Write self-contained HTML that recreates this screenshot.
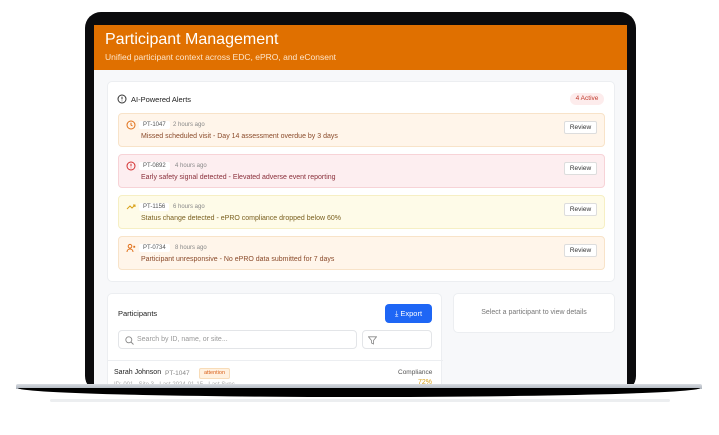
<!DOCTYPE html>
<html><head><style>
*{box-sizing:border-box;margin:0;padding:0}
body{width:719px;height:435px;background:#fff;position:relative;overflow:hidden;font-family:"Liberation Sans",sans-serif}
.abs{position:absolute}
.bezel{left:85px;top:12px;width:551px;height:380px;background:#0b0b0d;border-radius:16px}
.screen{left:94px;top:25px;width:533px;height:360px;background:#f7f8fa;overflow:hidden}
.hdr{left:0;top:0;width:533px;height:45px;background:#e07000;color:#fff}
.card{background:#fff;border:1px solid #eceef1;border-radius:5px}
.alert{left:10px;width:487px;height:34px;border-radius:4px;border:1px solid}
.pid{position:absolute;left:20px;top:7px;font-size:6px;color:#555;background:#fff;padding:1px 4px;border-radius:2px}
.ago{position:absolute;top:8px;font-size:6px;color:#888}
.msg{position:absolute;left:22px;top:19px;font-size:7px}
.rev{position:absolute;right:7px;top:7px;width:33px;height:13px;background:#fff;border:1px solid #ddd;border-radius:2px;font-size:6.5px;color:#333;text-align:center;line-height:11px}
.ic{position:absolute;left:7px;top:6px}
</style></head><body>
<div class="abs bezel"></div>
<div class="abs screen">
 <div class="abs hdr">
  <div class="abs" style="left:11px;top:6px;font-size:16px">Participant Management</div>
  <div class="abs" style="left:11px;top:27px;font-size:8.5px;color:#fde6cc">Unified participant context across EDC, ePRO, and eConsent</div>
 </div>
 <div class="abs card" style="left:13px;top:56px;width:508px;height:201px">
  <svg class="abs" style="left:9px;top:12px" width="10" height="10" viewBox="0 0 10 10"><circle cx="5" cy="5" r="4" fill="none" stroke="#333" stroke-width="1"/><path d="M5 2.8v2.6M5 6.6v.6" stroke="#333" stroke-width="1"/></svg>
  <div class="abs" style="left:23px;top:13px;font-size:7.5px;color:#222">AI-Powered Alerts</div>
  <div class="abs" style="left:462px;top:11px;width:34px;height:12px;background:#fdecec;border-radius:6px;color:#c0392b;font-size:6.5px;text-align:center;line-height:12px">4 Active</div>

  <div class="abs alert" style="top:31px;background:#fff5ea;border-color:#f8e3c9">
   <svg class="ic" width="10" height="10" viewBox="0 0 10 10"><circle cx="5" cy="5" r="4" fill="none" stroke="#e0701a" stroke-width="1"/><path d="M5 2.8V5l1.5 1" fill="none" stroke="#e0701a" stroke-width="1"/></svg>
   <span class="pid">PT-1047</span><span class="ago" style="left:54px">2 hours ago</span>
   <span class="msg" style="color:#8a4a2a">Missed scheduled visit - Day 14 assessment overdue by 3 days</span><span class="rev">Review</span></div>
  <div class="abs alert" style="top:72px;background:#fdeef0;border-color:#f7d3d7">
   <svg class="ic" width="10" height="10" viewBox="0 0 10 10"><circle cx="5" cy="5" r="4" fill="none" stroke="#d32f2f" stroke-width="1"/><path d="M5 2.8v2.6M5 6.6v.6" stroke="#d32f2f" stroke-width="1"/></svg>
   <span class="pid">PT-0892</span><span class="ago" style="left:56px">4 hours ago</span>
   <span class="msg" style="color:#8a2f3a">Early safety signal detected - Elevated adverse event reporting</span><span class="rev">Review</span></div>
  <div class="abs alert" style="top:113px;background:#fefbe8;border-color:#f6efc4">
   <svg class="ic" width="10" height="10" viewBox="0 0 10 10"><path d="M1 7l3-3 2 2 3-3M7 3h2v2" fill="none" stroke="#d9a21b" stroke-width="1"/></svg>
   <span class="pid">PT-1156</span><span class="ago" style="left:54px">6 hours ago</span>
   <span class="msg" style="color:#7a6020">Status change detected - ePRO compliance dropped below 60%</span><span class="rev">Review</span></div>
  <div class="abs alert" style="top:154px;background:#fff5ea;border-color:#f8e3c9">
   <svg class="ic" width="10" height="10" viewBox="0 0 10 10"><circle cx="4" cy="3.2" r="1.8" fill="none" stroke="#e0701a" stroke-width="1"/><path d="M1 9c0-2 1.5-3 3-3s3 1 3 3M7.5 3l1.5 1.5M9 3L7.5 4.5" fill="none" stroke="#e0701a" stroke-width="1"/></svg>
   <span class="pid">PT-0734</span><span class="ago" style="left:56px">8 hours ago</span>
   <span class="msg" style="color:#8a4a2a">Participant unresponsive - No ePRO data submitted for 7 days</span><span class="rev">Review</span></div>
 </div>

 <div class="abs card" style="left:13px;top:268px;width:335px;height:100px">
  <div class="abs" style="left:10px;top:15px;font-size:7.5px;color:#222">Participants</div>
  <div class="abs" style="left:277px;top:10px;width:47px;height:19px;background:#1e66f5;border-radius:4px;color:#fff;font-size:7.5px;line-height:19px;text-align:center">&#10515; Export</div>
  <div class="abs" style="left:10px;top:36px;width:239px;height:19px;border:1px solid #e3e5e8;border-radius:4px">
   <svg class="abs" style="left:6px;top:5px" width="9" height="9" viewBox="0 0 9 9"><circle cx="3.8" cy="3.8" r="3" fill="none" stroke="#888" stroke-width=".9"/><path d="M6 6l2.5 2.5" stroke="#888" stroke-width=".9"/></svg>
   <span class="abs" style="left:18px;top:5px;font-size:7px;color:#999">Search by ID, name, or site...</span></div>
  <div class="abs" style="left:254px;top:36px;width:70px;height:19px;border:1px solid #e3e5e8;border-radius:4px">
   <svg class="abs" style="left:5px;top:5px" width="9" height="9" viewBox="0 0 9 9"><path d="M.5 .8h8L5.5 4.5v3.5l-2-1V4.5z" fill="none" stroke="#888" stroke-width=".8"/></svg></div>
  <div class="abs" style="left:0;top:66px;width:335px;height:1px;background:#eceef1"></div>
  <div class="abs" style="left:6px;top:75px;font-size:7px;color:#222">Sarah Johnson</div>
  <div class="abs" style="left:57px;top:76px;font-size:6.5px;color:#888">PT-1047</div>
  <div class="abs" style="left:91px;top:74px;width:31px;height:11px;background:#fff1e0;border:1px solid #f8dcb8;border-radius:2px;font-size:5.5px;color:#d9601a;text-align:center;line-height:9px">attention</div>
  <div class="abs" style="left:6px;top:88px;font-size:6px;color:#aaa">ID: 001 · Site 3 · Last 2024-01-15 · Last Sync</div>
  <div class="abs" style="left:290px;top:75px;font-size:6.5px;color:#555">Compliance</div>
  <div class="abs" style="left:310px;top:85px;font-size:7px;color:#d9a21b">72%</div>
 </div>
 <div class="abs card" style="left:359px;top:268px;width:162px;height:40px">
  <div class="abs" style="left:0;top:15px;width:160px;text-align:center;font-size:7px;color:#777">Select a participant to view details</div>
 </div>
</div>
<div class="abs" style="left:16px;top:384px;width:686px;height:5px;background:linear-gradient(#d8dce2,#aeb4bc);border-radius:2px 2px 0 0"></div>
<div class="abs" style="left:18px;top:388px;width:682px;height:9px;background:#000;border-radius:0 0 50% 50%/0 0 100% 100%"></div>
<div class="abs" style="left:50px;top:399px;width:620px;height:3px;background:#eceef0;border-radius:2px"></div>
</body></html>
